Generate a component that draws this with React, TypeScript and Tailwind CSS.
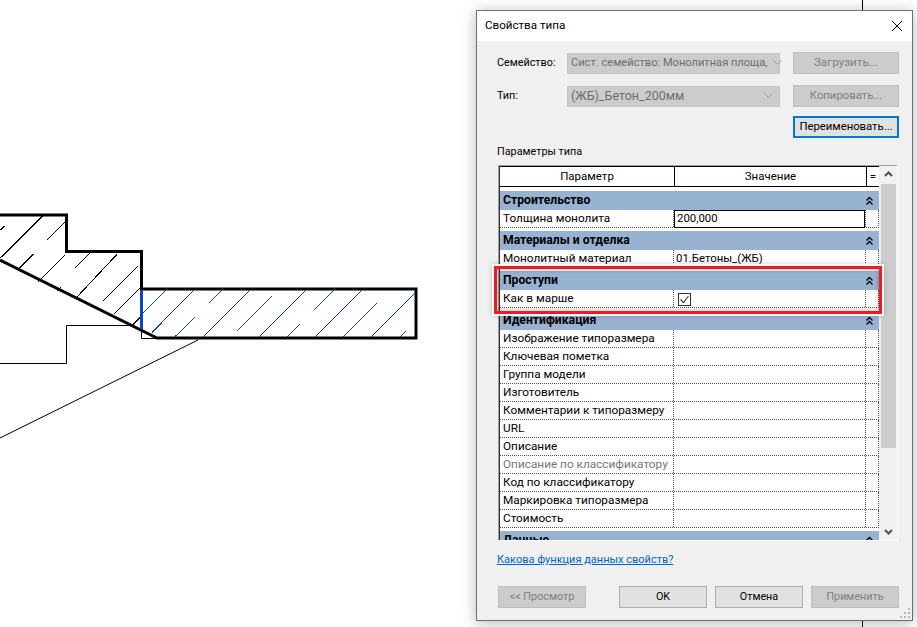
import React from "react";

const font = { fontFamily: 'Roboto,"Noto Sans",sans-serif' };

function Chevrons() {
  return (
    <svg width="9" height="10" viewBox="0 0 9 10" className="block">
      <path d="M1.5 4.5 L4.5 1.5 L7.5 4.5 M1.5 8.5 L4.5 5.5 L7.5 8.5" fill="none" stroke="#000" strokeWidth="1.4" />
    </svg>
  );
}

function Section({ title, rows, clipped }: { title: string; rows?: React.ReactNode; clipped?: boolean }) {
  return (
    <div className={clipped ? "" : "pb-[3px]"}>
      <div className="flex h-[19px] items-center justify-between bg-[#98b3d1] pl-[3px] pr-[5px]">
        <span className="whitespace-nowrap text-[12.2px] font-bold leading-none text-black">{title}</span>
        <Chevrons />
      </div>
      {rows}
    </div>
  );
}

function Row({ name, value, gray }: { name: string; value?: React.ReactNode; gray?: boolean }) {
  return (
    <div className="flex h-[18px] border-b border-r border-dotted border-[#555] bg-white">
      <div className={`flex w-[174px] shrink-0 items-center whitespace-nowrap border-r border-dotted border-[#555] pl-[3px] text-[11.8px] leading-none ${gray ? "text-[#777]" : "text-black"}`}>
        {name}
      </div>
      <div className="flex w-[192px] shrink-0 items-center border-r border-dotted border-[#555] pl-[2px] text-[11.4px] leading-none text-black">
        {value}
      </div>
      <div className="flex-1" />
    </div>
  );
}

function Btn({ children, disabled, focus, w, size }: { children: React.ReactNode; disabled?: boolean; focus?: boolean; w: string; size: string }) {
  const tone = focus
    ? "border-2 border-[#0078d7] bg-[#e1e1e1] text-black"
    : disabled
      ? "border border-[#bfbfbf] bg-[#cccccc] text-[#7f7f7f]"
      : "border border-[#adadad] bg-[#e1e1e1] text-black";
  return <div className={`flex h-[22px] items-center justify-center whitespace-nowrap leading-none ${size} ${w} ${tone}`}>{children}</div>;
}

function Select({ text, size }: { text: string; size: string }) {
  return (
    <div className={`flex h-[21px] w-[213px] items-center justify-between border border-[#c4c4c4] bg-[#cccccc] pl-[3px] pr-[6px] leading-none text-[#6d6d6d] ${size}`}>
      <span className="whitespace-nowrap">{text}</span>
      <svg width="9" height="6" viewBox="0 0 9 6" className="ml-[5px] shrink-0">
        <path d="M0.5 0.5 L4.5 4.5 L8.5 0.5" fill="none" stroke="#9a9a9a" />
      </svg>
    </div>
  );
}

function Drawing() {
  return (
    <svg width="476" height="627" viewBox="0 0 476 627" className="block">
      <path
        shapeRendering="crispEdges"
        stroke="#000"
        strokeWidth="1"
        fill="none"
        d="M0 258.3 L42.7 216 M47.3 239.7 L65 222.3 M0 230.3 L4.7 226 M19.3 268.3 L33.3 254 M38.3 281.7 L65 255 M57.3 291 L61 287 M75.3 267.7 L90 252.7 M76 298 L117.3 254 M103.3 300.7 L138 266 M114 314.3 L140 288.3 M132.7 325 L140 317.7"
      />
      <path
        shapeRendering="crispEdges"
        stroke="#0b46c8"
        strokeWidth="1"
        fill="none"
        d="M143.3 312.7 L166 290 M151.7 332.7 L194 290 M175 336.7 L195 317.3 M209.3 302.7 L222 290 M203.3 336.7 L250 290 M237.3 330.7 L272 296 M259.3 336.7 L306 290 M287.3 336.7 L300 324 M314 310 L334 290 M315.3 336.7 L362 290 M343.3 336.7 L376.7 303.3 M371.3 336.7 L415.3 292.7 M400 336.7 L406 331.3"
      />
      <path d="M0 215 H66.5 V251.5 H141.5 V289 H416 V338 H157 L0 260" fill="none" stroke="#000" strokeWidth="3" />
      <path d="M141.5 290 V329" fill="none" stroke="#0b46c8" strokeWidth="3" />
      <g fill="none" stroke="#000" strokeWidth="1">
        <path d="M0 363.5 H66.5 V325.5 H133" />
        <path d="M141.5 330 V338.5 H157" />
        <path d="M198 340 L0 438" />
      </g>
    </svg>
  );
}

export default function App() {
  const rowsId = [
    "Изображение типоразмера", "Ключевая пометка", "Группа модели", "Изготовитель",
    "Комментарии к типоразмеру", "URL", "Описание",
  ];
  return (
    <div className="relative h-[627px] w-[917px] overflow-hidden bg-white" style={font}>
      <div className="absolute left-0 top-0"><Drawing /></div>
      <div className="absolute left-[862px] top-0 h-[627px] w-px bg-black" />

      <div className="absolute left-[476px] top-[10px] flex h-[611px] w-[437px] flex-col border border-[#6f6f6f] bg-[#f0f0f0] shadow-[0_2px_14px_rgba(0,0,0,0.28)]">
        <div className="flex h-[30px] shrink-0 items-center justify-between bg-white pl-[8px] pr-[9px]">
          <span className="text-[11.6px] leading-none text-black">Свойства типа</span>
          <svg width="12" height="12" viewBox="0 0 12 12"><path d="M1 1 L11 11 M11 1 L1 11" stroke="#000" strokeWidth="1" /></svg>
        </div>

        <div className="flex flex-1 flex-col pl-[20px] pr-[13px]">
          <div className="mt-[11px] flex items-center">
            <span className="w-[70px] text-[10.8px] leading-none text-black">Семейство:</span>
            <Select text="Сист. семейство: Монолитная площа," size="text-[11.1px]" />
            <div className="ml-[13px]"><Btn disabled w="w-[106px]" size="text-[11.7px]">Загрузить...</Btn></div>
          </div>
          <div className="mt-[11px] flex items-center">
            <span className="w-[70px] text-[10.8px] leading-none text-black">Тип:</span>
            <Select text="(ЖБ)_Бетон_200мм" size="text-[12.5px]" />
            <div className="ml-[13px]"><Btn disabled w="w-[106px]" size="text-[11.3px]">Копировать...</Btn></div>
          </div>
          <div className="mt-[9px] flex justify-end">
            <Btn focus w="w-[106px]" size="text-[11.3px]">Переименовать...</Btn>
          </div>
          <div className="mt-[7px] text-[10.8px] leading-[14px] text-black">Параметры типа</div>

          <div className="ml-[1px] mt-[6px] flex h-[376px] w-[400px] overflow-hidden border border-[#a0a0a0] border-b-white border-r-white bg-white">
            <div className="flex w-[380px] shrink-0 flex-col border-l border-[#333]">
              <div className="flex h-[21px] shrink-0 items-stretch border-b border-t border-black bg-white text-[11.5px] leading-none text-black">
                <div className="flex w-[175px] items-center justify-center border-r border-black">Параметр</div>
                <div className="flex w-[192px] items-center justify-center border-r border-black">Значение</div>
                <div className="flex flex-1 items-center justify-center">=</div>
              </div>
              <div className="h-[4px] shrink-0 bg-white" />
              <Section title="Строительство" rows={
                <Row name="Толщина монолита" value={
                  <div className="-ml-[2px] flex h-[18px] w-[192px] items-center border border-black pl-[2px]">200,000</div>
                } />
              } />
              <Section title="Материалы и отделка" rows={<Row name="Монолитный материал" value="01.Бетоны_(ЖБ)" />} />
              <Section title="Проступи" rows={
                <Row name="Как в марше" value={
                  <svg width="14" height="14" viewBox="0 0 14 14" className="ml-[2px] mt-[2px]">
                    <rect x="0.5" y="0.5" width="12" height="12" fill="#fff" stroke="#333" />
                    <path d="M2.5 6.5 L5.5 9.5 L10.5 3" fill="none" stroke="#444" strokeWidth="1.2" />
                  </svg>
                } />
              } />
              <Section title="Идентификация" rows={
                <>
                  {rowsId.map((n) => <Row key={n} name={n} />)}
                  <Row name="Описание по классификатору" gray />
                  <Row name="Код по классификатору" />
                  <Row name="Маркировка типоразмера" />
                  <Row name="Стоимость" />
                </>
              } />
              <div className="h-[9px] overflow-hidden">
                <Section title="Данные" clipped />
              </div>
            </div>
            <div className="flex flex-1 flex-col items-center bg-[#f0f0f0]">
              <svg width="17" height="18" viewBox="0 0 17 18"><path d="M5 10 L8.5 6.5 L12 10" fill="none" stroke="#505050" strokeWidth="2" /></svg>
              <div className="h-[264px] w-[15px] bg-[#cdcdcd]" />
              <div className="flex-1" />
              <svg width="17" height="17" viewBox="0 0 17 17"><path d="M5 7 L8.5 10.5 L12 7" fill="none" stroke="#505050" strokeWidth="2" /></svg>
            </div>
          </div>

          <div className="mt-[12px] text-[11px] leading-[14px] text-[#0066cc] underline">Какова функция данных свойств?</div>

          <div className="ml-[1px] mt-[19px] flex">
            <Btn disabled w="w-[88px]" size="text-[10.8px]">&lt;&lt; Просмотр</Btn>
            <div className="ml-[33px]"><Btn w="w-[88px]" size="text-[10.8px]">OK</Btn></div>
            <div className="ml-[8px]"><Btn w="w-[88px]" size="text-[10.8px]">Отмена</Btn></div>
            <div className="ml-[8px]"><Btn disabled w="w-[88px]" size="text-[10.8px]">Применить</Btn></div>
          </div>
        </div>

        <svg width="12" height="12" viewBox="0 0 12 12" className="absolute bottom-[1px] right-[1px]">
          <g fill="#b8b8b8">
            <rect x="9" y="1" width="2" height="2" /><rect x="5" y="5" width="2" height="2" /><rect x="9" y="5" width="2" height="2" />
            <rect x="1" y="9" width="2" height="2" /><rect x="5" y="9" width="2" height="2" /><rect x="9" y="9" width="2" height="2" />
          </g>
        </svg>
      </div>

      <div className="absolute left-[494px] top-[266px] h-[48px] w-[388px] border-[3px] border-[#ed1c24] shadow-[0_0_0_2px_rgba(255,255,255,0.9),0_0_5px_2px_rgba(0,0,0,0.2),inset_0_0_4px_1px_rgba(0,0,0,0.25)]" />
    </div>
  );
}
